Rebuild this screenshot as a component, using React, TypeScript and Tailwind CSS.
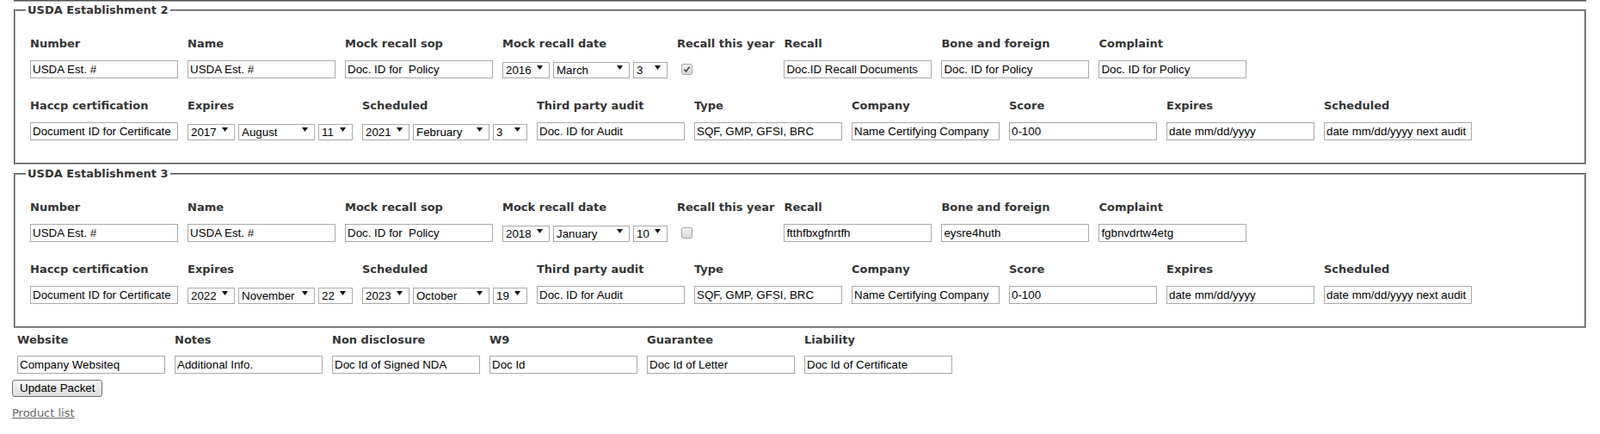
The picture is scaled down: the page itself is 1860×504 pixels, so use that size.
import React from "react";

// Interfaces
interface DateValue {
  year: string;
  month: string;
  day: string;
}

interface FieldDef {
  label: string;
  value?: string;
  date?: DateValue;
  check?: boolean;
}

interface Establishment {
  title: string;
  rowOne: FieldDef[];
  rowTwo: FieldDef[];
}

const MONTHS = [
  "January",
  "February",
  "March",
  "April",
  "May",
  "June",
  "July",
  "August",
  "September",
  "October",
  "November",
  "December",
];
const YEARS = Array.from({ length: 21 }, (_, i) => String(2010 + i));
const DAYS = Array.from({ length: 31 }, (_, i) => String(i + 1));

const buildRowTwo = (expires: DateValue, scheduled: DateValue): FieldDef[] => [
  { label: "Haccp certification", value: "Document ID for Certificate" },
  { label: "Expires", date: expires },
  { label: "Scheduled", date: scheduled },
  { label: "Third party audit", value: "Doc. ID for Audit" },
  { label: "Type", value: "SQF, GMP, GFSI, BRC" },
  { label: "Company", value: "Name Certifying Company" },
  { label: "Score", value: "0-100" },
  { label: "Expires", value: "date mm/dd/yyyy" },
  { label: "Scheduled", value: "date mm/dd/yyyy next audit" },
];

const establishments: Establishment[] = [
  {
    title: "USDA Establishment 2",
    rowOne: [
      { label: "Number", value: "USDA Est. #" },
      { label: "Name", value: "USDA Est. #" },
      { label: "Mock recall sop", value: "Doc. ID for  Policy" },
      { label: "Mock recall date", date: { year: "2016", month: "March", day: "3" } },
      { label: "Recall this year", check: true },
      { label: "Recall", value: "Doc.ID Recall Documents" },
      { label: "Bone and foreign", value: "Doc. ID for Policy" },
      { label: "Complaint", value: "Doc. ID for Policy" },
    ],
    rowTwo: buildRowTwo(
      { year: "2017", month: "August", day: "11" },
      { year: "2021", month: "February", day: "3" }
    ),
  },
  {
    title: "USDA Establishment 3",
    rowOne: [
      { label: "Number", value: "USDA Est. #" },
      { label: "Name", value: "USDA Est. #" },
      { label: "Mock recall sop", value: "Doc. ID for  Policy" },
      { label: "Mock recall date", date: { year: "2018", month: "January", day: "10" } },
      { label: "Recall this year", check: false },
      { label: "Recall", value: "ftthfbxgfnrtfh" },
      { label: "Bone and foreign", value: "eysre4huth" },
      { label: "Complaint", value: "fgbnvdrtw4etg" },
    ],
    rowTwo: buildRowTwo(
      { year: "2022", month: "November", day: "22" },
      { year: "2023", month: "October", day: "19" }
    ),
  },
];

const packetFields: FieldDef[] = [
  { label: "Website", value: "Company Websiteq" },
  { label: "Notes", value: "Additional Info." },
  { label: "Non disclosure", value: "Doc Id of Signed NDA" },
  { label: "W9", value: "Doc Id" },
  { label: "Guarantee", value: "Doc Id of Letter" },
  { label: "Liability", value: "Doc Id of Certificate" },
];

// Controls
const TextBox: React.FC<{ value: string }> = ({ value }) => (
  <input
    type="text"
    defaultValue={value}
    className="h-[21px] w-[172px] border border-[#a9a9a9] bg-white px-[2px] font-['Liberation_Sans',Arial,sans-serif] text-[13.33px] text-black outline-none"
  />
);

const DropDown: React.FC<{ value: string; options: string[]; widthClass: string }> = ({
  value,
  options,
  widthClass,
}) => (
  <span className="relative inline-block">
    <select
      defaultValue={value}
      className={`${widthClass} h-[19px] appearance-none border border-[#a9a9a9] bg-white pl-[3px] font-['Liberation_Sans',Arial,sans-serif] text-[13.33px] leading-[17px] text-black outline-none`}
    >
      {options.map((o) => (
        <option key={o} value={o}>
          {o}
        </option>
      ))}
    </select>
    <svg
      viewBox="0 0 7 5"
      className="pointer-events-none absolute right-[8px] top-[7px] h-[5px] w-[7px]"
    >
      <path d="M0 0 H7 L3.5 5 Z" fill="#111" />
    </svg>
  </span>
);

const DatePicker: React.FC<{ date: DateValue }> = ({ date }) => (
  <div className="flex items-center gap-[4px]">
    <DropDown value={date.year} options={YEARS} widthClass="w-[55px]" />
    <DropDown value={date.month} options={MONTHS} widthClass="w-[89px]" />
    <DropDown value={date.day} options={DAYS} widthClass="w-[40px]" />
  </div>
);

const CheckBox: React.FC<{ checked: boolean }> = ({ checked }) => (
  <span className="ml-[5px] inline-flex h-[13px] w-[13px] items-center justify-center rounded-[2px] border border-[#a8a8a8] bg-linear-to-b from-[#f4f4f4] to-[#d8d8d8]">
    {checked && (
      <svg viewBox="0 0 9 9" className="h-[9px] w-[9px]">
        <path d="M1.4 4.6 L3.5 6.9 L7.7 1.6" stroke="#505050" strokeWidth="1.7" fill="none" />
      </svg>
    )}
  </span>
);

const Field: React.FC<{ field: FieldDef; inputGap?: string }> = ({ field, inputGap = "mt-[11px]" }) => (
  <div className="flex flex-col">
    <div className="h-4 whitespace-nowrap text-[13px] font-bold leading-4 text-[#333]">
      {field.label}
    </div>
    <div className={`${inputGap} flex h-[21px] items-center`}>
      {field.date && <DatePicker date={field.date} />}
      {field.check !== undefined && <CheckBox checked={field.check} />}
      {field.value !== undefined && <TextBox value={field.value} />}
    </div>
  </div>
);

const EstablishmentBox: React.FC<{ est: Establishment; top: string }> = ({ est, top }) => (
  <fieldset
    className={`${top} mx-4 min-w-0 border-2 border-[#a4a4a4] [border-style:groove] pb-[26px] pl-[17px] pt-[23px]`}
  >
    <legend className="-ml-[5px] px-[2px] text-[13px] font-bold leading-4 text-[#333]">
      {est.title}
    </legend>
    <div className="flex flex-col gap-[24px]">
      <div className="flex gap-[11px]">
        {est.rowOne.map((f, i) => (
          <Field key={i} field={f} />
        ))}
      </div>
      <div className="flex gap-[11px]">
        {est.rowTwo.map((f, i) => (
          <Field key={i} field={f} />
        ))}
      </div>
    </div>
  </fieldset>
);

const App: React.FC = () => {
  return (
    <div className="min-h-screen bg-white font-['DejaVu_Sans',Verdana,sans-serif]">
      {/* tail of the previous establishment box */}
      <div className="mx-4 h-[2px] border-b-2 border-[#a4a4a4] [border-style:groove]" />

      <EstablishmentBox est={establishments[0]} top="mt-[2px]" />
      <EstablishmentBox est={establishments[1]} top="mt-[3px]" />

      <div className="ml-[20px] mt-[6px] flex gap-[11px]">
        {packetFields.map((f, i) => (
          <Field key={i} field={f} inputGap="mt-[10px]" />
        ))}
      </div>

      <button
        type="button"
        className="ml-[14px] mt-[7px] block h-[20px] rounded-[3px] border border-[#707070] bg-linear-to-b from-[#f6f6f6] to-[#dcdcdc] px-[8px] font-['Liberation_Sans',Arial,sans-serif] text-[13.33px] leading-[18px] text-black"
      >
        Update Packet
      </button>

      <a
        href="#"
        className="ml-[14px] mt-[11px] block w-fit text-[13px] leading-4 text-[#666] underline"
      >
        Product list
      </a>
    </div>
  );
};

export default App;
